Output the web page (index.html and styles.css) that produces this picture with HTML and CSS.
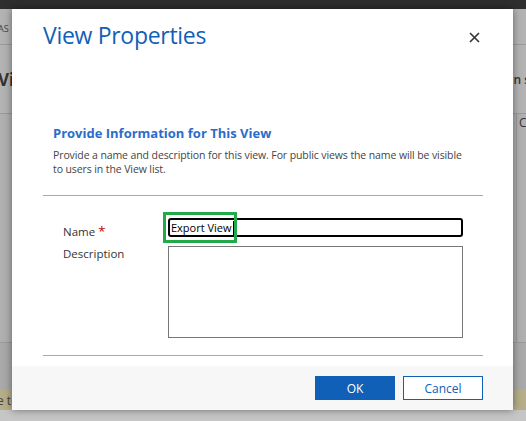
FILE: index.html
```html
<!DOCTYPE html>
<html>
<head>
<meta charset="utf-8">
<link rel="stylesheet" href="styles.css">
</head>
<body>
<div class="page">
  <div class="topbar"></div>
  <div class="bg-row bg-row1"><span class="bg-as">AS</span></div>
  <div class="bg-row bg-row2"><span class="bg-vi">Vi</span><span class="bg-ns">n s</span></div>
  <div class="bg-row bg-row3"><span class="bg-c">C</span></div>
  <div class="bg-row bg-row4"></div>
  <div class="bg-notice"><span>e to</span></div>
  <div class="bg-bottom"></div>
</div>

<div class="dialog">
  <div class="dlg-body">
    <div class="dlg-head">
      <h1 class="dlg-title">View Properties</h1>
      <button class="dlg-close" aria-label="Close">
        <svg width="11" height="11" viewBox="0 0 11 11"><path d="M1 1 L10 10 M10 1 L1 10" stroke="#333" stroke-width="1.6" fill="none"/></svg>
      </button>
    </div>
    <div class="section">
      <h2 class="sec-title">Provide Information for This View</h2>
      <p class="sec-desc">Provide a name and description for this view. For public views the name will be visible to users in the View list.</p>
    </div>
    <div class="form">
      <div class="form-row">
        <label class="form-label">Name <span class="req">*</span></label>
        <div class="name-field">
          <div class="name-input"><span class="name-text">Export View</span><span class="caret"></span></div>
          <div class="highlight"></div>
        </div>
      </div>
      <div class="form-row">
        <label class="form-label desc-label">Description</label>
        <div class="desc-input"></div>
      </div>
    </div>
  </div>
  <div class="dlg-foot">
    <button class="btn btn-ok">OK</button>
    <button class="btn btn-cancel">Cancel</button>
  </div>
</div>
</body>
</html>
```
FILE: styles.css
```css
* { box-sizing: border-box; }
html, body { margin: 0; padding: 0; }
body {
  width: 526px;
  height: 421px;
  overflow: hidden;
  position: relative;
  font-family: "Open Sans", "Noto Sans", sans-serif;
  background: #b3b3b3;
}
.page { width: 526px; height: 421px; display: flex; flex-direction: column; }
.topbar { height: 9px; background: #2e2e2e; }
.bg-row { position: relative; border-bottom: 1px solid #9a9a9a; font-size: 12px; color: #333; }
.bg-row1 { height: 36px; padding-top: 10px; }
.bg-as { font-size: 9px; color: #444; margin-left: -2px; }
.bg-row2 { height: 69px; display: flex; justify-content: space-between; align-items: center; }
.bg-vi { font-weight: bold; font-size: 17px; color: #333; margin-left: -2px; }
.bg-ns { font-size: 12px; color: #333; margin-right: -4px; font-weight: 600; }
.bg-row3 { height: 229px; display: flex; justify-content: flex-end; align-items: flex-start; background: #b0b0b0; }
.bg-c { font-size: 12px; color: #333; width: 10px; padding-left: 2px; border-left: 1px solid #999; height: 100%; }
.bg-row4 { height: 47px; border-bottom: none; background: #a9a9a9; }
.bg-notice { height: 20px; background: #b5ae88; font-size: 12px; color: #444; padding-top: 2px; }
.bg-notice span { margin-left: -3px; }
.bg-bottom { flex: 1; background: #c6c6c6; }

.dialog {
  position: absolute;
  left: 12px;
  top: 9px;
  width: 501px;
  height: 401px;
  background: #fff;
  display: flex;
  flex-direction: column;
  box-shadow: 0 0 8px rgba(0,0,0,0.45);
}
.dlg-body { flex: 1; padding: 0 30px 0 31px; }
.dlg-head { display: flex; justify-content: space-between; align-items: flex-start; height: 100px; }
.dlg-title {
  margin: 10px 0 0 0;
  font-weight: normal;
  font-size: 23px;
  color: #1160b7;
  letter-spacing: -0.3px;
}
.dlg-close { border: none; background: none; padding: 0; margin: 23px 3px 0 0; width: 11px; height: 11px; display: flex; }
.section { padding: 15px 0 19px 10px; border-bottom: 1px solid #a9a9a9; }
.sec-title { margin: 0; font-size: 13px; font-weight: bold; color: #2a6dcc; line-height: 18px; }
.sec-desc { margin: 6px 0 0 0; font-size: 10.5px; letter-spacing: -0.1px; color: #444; line-height: 14px; width: 416px; }
.form { padding: 22px 0 17px 0; border-bottom: 1px solid #a9a9a9; }
.form-row { display: flex; }
.form-label { width: 125px; padding-left: 20px; font-size: 11.5px; color: #333; }
.req { color: #b00; font-size: 13px; }
.name-field { position: relative; width: 295px; height: 19px; }
.form-row:first-child .form-label { padding-top: 4px; }
.name-input {
  width: 295px; height: 19px;
  border: 2px solid #000; border-radius: 3px;
  font-size: 11px; color: #000; padding-left: 1px; line-height: 15px;
  display: flex; align-items: center;
}
.caret { display: inline-block; width: 1px; height: 14px; background: #000; margin-left: 1px; }
.highlight {
  position: absolute; left: -5px; top: -6px; width: 74px; height: 31px;
  border: 3px solid #22aa48;
}
.desc-label { padding-top: 0; }
.form-row + .form-row { margin-top: 6px; }
.desc-input { width: 295px; height: 92px; border: 1px solid #777; }

.dlg-foot {
  height: 44px;
  background: #f7f7f7;
  display: flex;
  justify-content: flex-end;
  align-items: flex-start;
  gap: 8px;
  padding: 10px 30px 0 0;
}
.btn { width: 80px; height: 24px; font-family: inherit; font-size: 12px; border: 1px solid #1160b7; padding: 0; }
.btn-ok { background: #1160b7; color: #fff; }
.btn-cancel { background: #fff; color: #1160b7; }
```
